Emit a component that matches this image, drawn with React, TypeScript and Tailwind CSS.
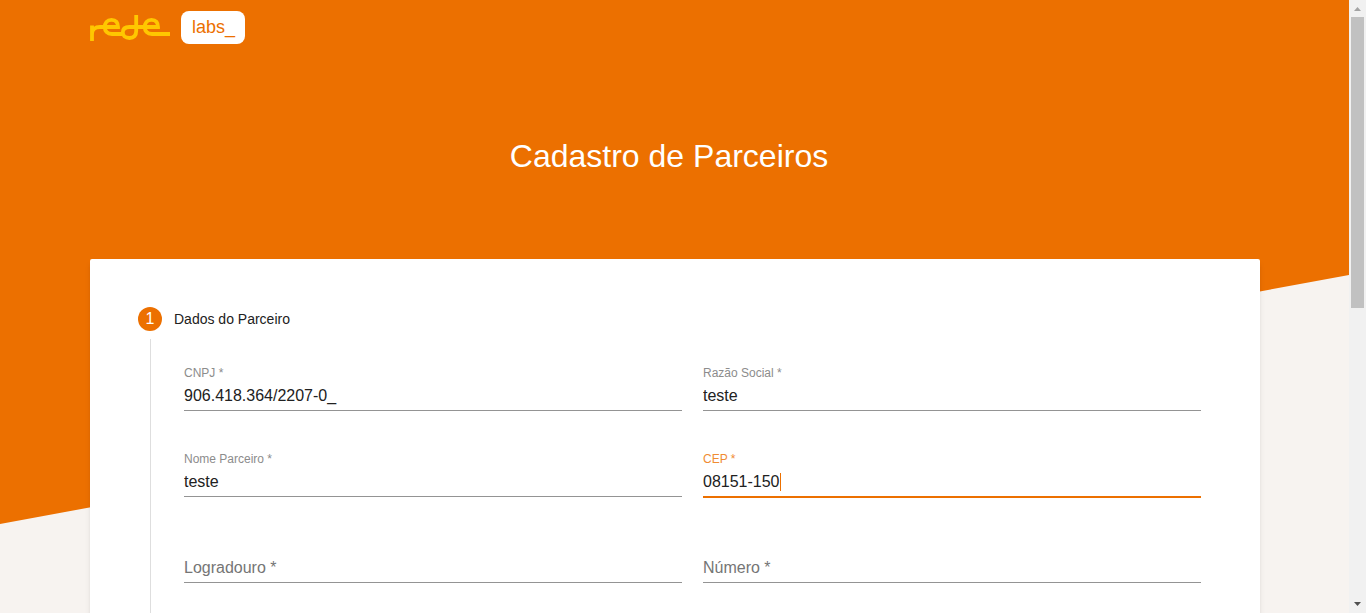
import React, { useState } from "react";

function Logo() {
  return (
    <svg role="img" aria-label="rede" viewBox="0 0 80 28" className="h-7 w-20" fill="none" stroke="#ffc700" strokeWidth="3.8">
      <path d="M2 27V11.500M2 20C2 16 5 13 10 13H28C28 8.500 26 5.800 21.500 5.800C17 5.800 14.800 9 14.800 13C14.800 17 17 20 22 20H34" />
      <path d="M46.200 1V17C46.200 21.500 44 24 39.500 24C35 24 32.800 21.500 32.800 18.500C32.800 15 35 13 39.500 13H68C68 8.500 66 5.800 61.500 5.800C57 5.800 54.800 9 54.800 13C54.800 17 57 20 62 20H80" />
    </svg>
  );
}

type FieldProps = { id: string; label: string; initial?: string; active?: boolean };

function Field({ id, label, initial = "", active = false }: FieldProps) {
  const [value, setValue] = useState(initial);
  const filled = value !== "";
  return (
    <div className="relative h-[86px] pt-4">
      <label
        htmlFor={id}
        className={
          filled
            ? `block h-4 text-xs leading-4 ${active ? "text-[#f08c33]" : "text-[#8c8c8c]"}`
            : "pointer-events-none absolute top-9 left-0 text-base leading-[22px] text-[#757575]"
        }
      >
        {label} *
      </label>
      <div className={`flex items-center ${filled ? "" : "mt-4"} ${active ? "h-[31px] border-b-2 border-[#ec7000]" : "h-[30px] border-b border-[#949494]"}`}>
        <input
          id={id}
          value={value}
          onChange={(e) => setValue(e.target.value)}
          className={`h-5 bg-transparent text-base leading-5 text-[#212121] outline-none ${active ? "field-sizing-content" : "w-full"}`}
        />
        {active && <span aria-hidden="true" className="h-[18px] w-px bg-[#ec7000]" />}
      </div>
    </div>
  );
}

function Scrollbar() {
  return (
    <div aria-hidden="true" className="flex w-[17px] shrink-0 flex-col items-center bg-[#f1f1f1]">
      <svg viewBox="0 0 17 17" className="h-[17px] w-[17px] shrink-0" fill="#a3a3a3">
        <path d="M5 11h7L8.500 7z" />
      </svg>
      <div className="h-[291px] w-[13px] bg-[#c1c1c1]" />
      <svg viewBox="0 0 17 17" className="mt-auto h-[17px] w-[17px] shrink-0" fill="#505050">
        <path d="M5 6h7L8.500 10z" />
      </svg>
    </div>
  );
}

export default function App() {
  return (
    <div className="flex h-screen overflow-hidden bg-[#f7f3f0] font-['Liberation_Sans',Arial,sans-serif]">
      <div className="relative isolate min-w-0 flex-1 overflow-hidden pr-[89px] pl-[90px]">
        <div aria-hidden="true" className="absolute inset-x-0 top-0 -z-10 h-[524px] bg-[#ec7000] [clip-path:polygon(0_0,100%_0,100%_275px,0_524px)]" />
        <header className="flex h-14 items-center gap-[11px]">
          <Logo />
          <span className="mb-px flex h-[33px] items-center rounded-lg bg-white pr-[10px] pb-px pl-[11px] text-lg text-[#ec7000]">labs_</span>
        </header>
        <h1 className="pt-20 pr-3 text-center text-[32px] leading-10 text-white">Cadastro de Parceiros</h1>
        <main className="mt-[83px] rounded-xs bg-white px-12 pt-12 pb-12 shadow-md">
          <form>
            <h2 className="flex h-6 items-center gap-3 text-sm text-[#212121]">
              <span className="flex size-6 items-center justify-center rounded-full bg-[#ec7000] text-base text-white">1</span>
              Dados do Parceiro
            </h2>
            <div className="mt-2 ml-3 border-l border-[#dedede] pt-[10px] pr-[11px] pb-6 pl-[33px]">
              <div className="grid grid-cols-2 gap-x-[21px]">
                <Field id="cnpj" label="CNPJ" initial="906.418.364/2207-0_" />
                <Field id="razao" label="Razão Social" initial="teste" />
                <Field id="nome" label="Nome Parceiro" initial="teste" />
                <Field id="cep" label="CEP" initial="08151-150" active />
                <Field id="logradouro" label="Logradouro" />
                <Field id="numero" label="Número" />
              </div>
            </div>
          </form>
        </main>
      </div>
      <Scrollbar />
    </div>
  );
}
